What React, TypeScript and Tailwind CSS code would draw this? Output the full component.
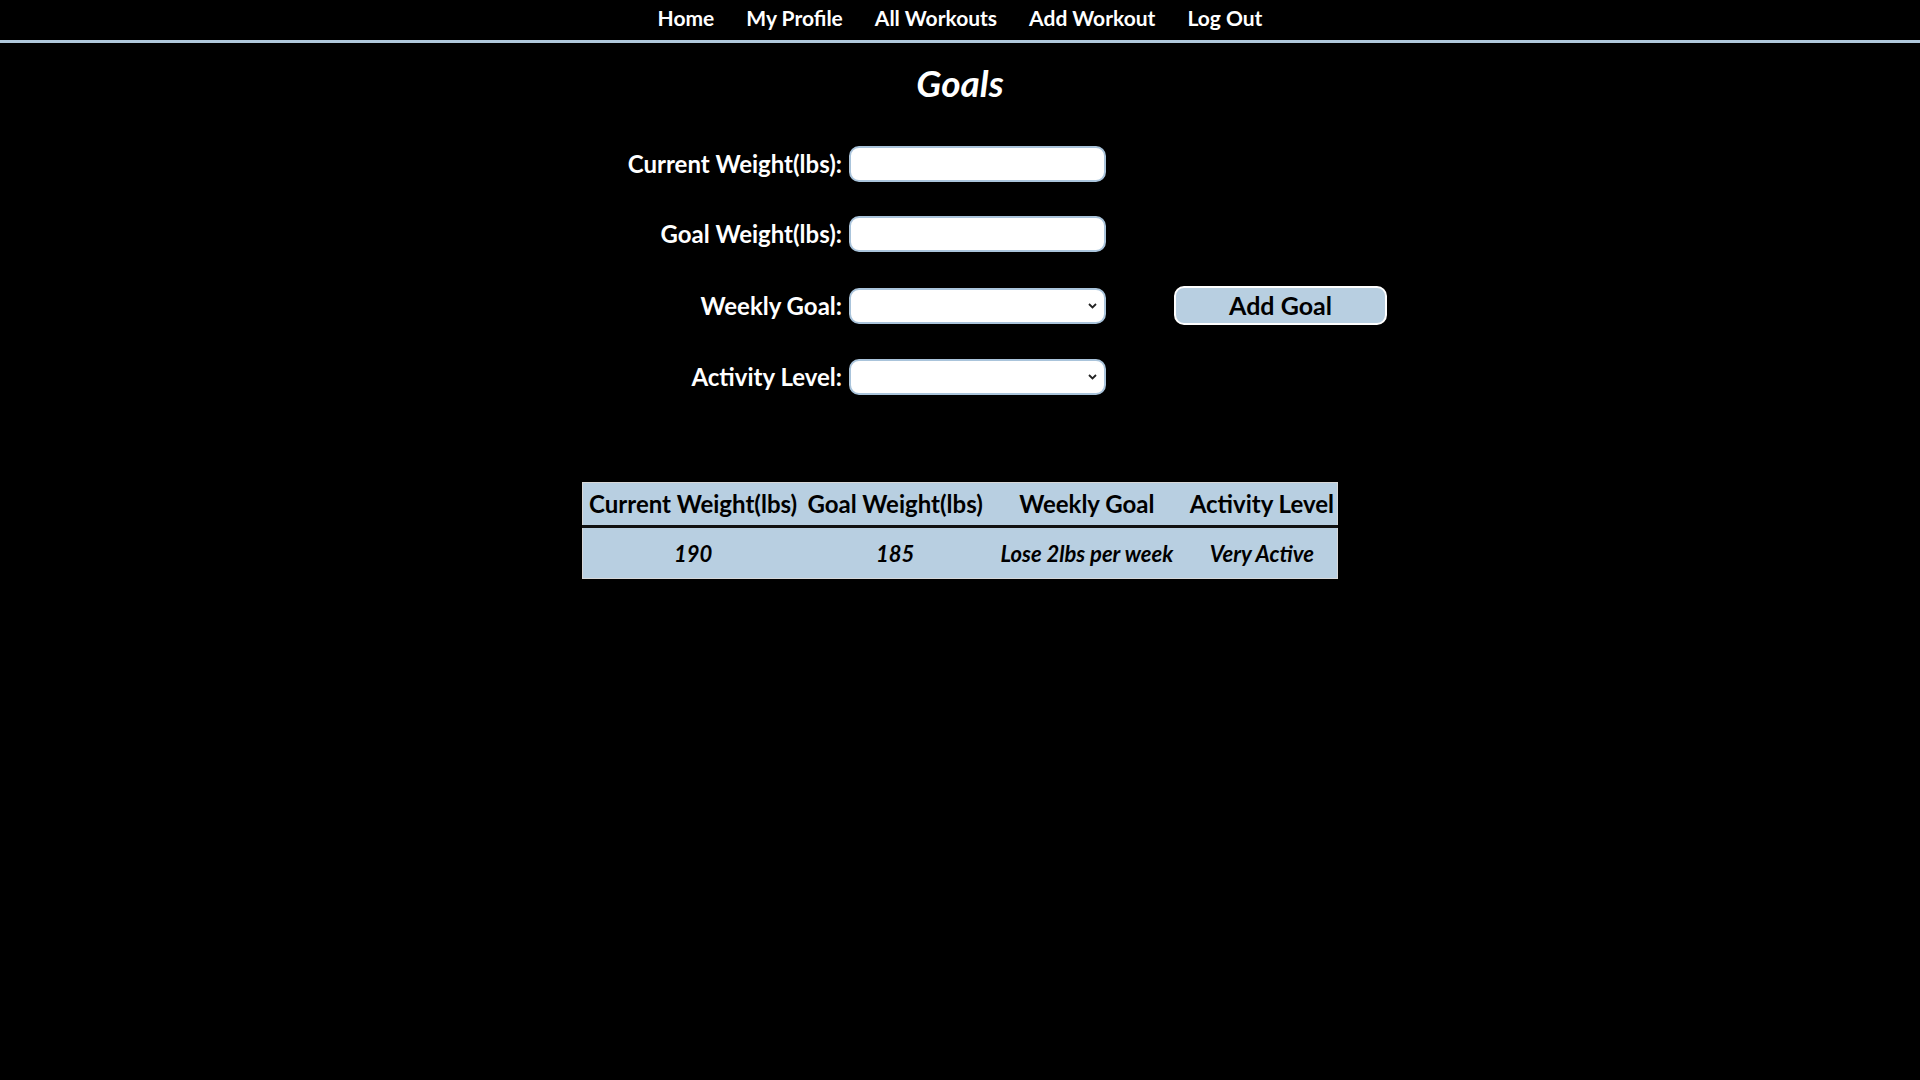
const navLinks = ["Home", "My Profile", "All Workouts", "Add Workout", "Log Out"];

const Chevron = () => (
   <svg
      className="pointer-events-none absolute right-[9px] top-1/2 -translate-y-1/2"
      width="9"
      height="6"
      viewBox="0 0 9 6"
      fill="none"
   >
      <path d="M1 1l3.5 3.5L8 1" stroke="#222" strokeWidth="1.8" />
   </svg>
);

const Field = ({ label, select }: { label: string; select?: boolean }) => (
   <>
      <label className="text-right text-[24px] font-bold text-white leading-none">{label}</label>
      <div className="relative h-[36px]">
         {select ? (
            <>
               <select className="appearance-none w-full h-full bg-white rounded-[10px] border-2 border-[#aac4db] outline-none" />
               <Chevron />
            </>
         ) : (
            <input
               type="text"
               className="w-full h-full bg-white rounded-[10px] border-2 border-[#aac4db] outline-none px-2"
            />
         )}
      </div>
   </>
);

export default function App() {
   return (
      <div
         className="min-h-screen w-full bg-black text-white"
         style={{ fontFamily: "Lato, 'Open Sans', sans-serif" }}
      >
         <header className="h-[40px] border-b-[3px] border-[#b0c8dc] box-content">
            <nav>
               <ul className="flex justify-center gap-[32px] pt-[4px]">
                  {navLinks.map((l) => (
                     <li key={l}>
                        <a href="#" className="text-[21px] font-bold text-white leading-[28px]">
                           {l}
                        </a>
                     </li>
                  ))}
               </ul>
            </nav>
         </header>

         <h1 className="text-center text-[37px] font-bold italic leading-[44px] mt-[18px]">Goals</h1>

         <form className="flex justify-center mt-[41px]">
            <div className="grid grid-cols-[309px_257px_274px] gap-x-[7px] gap-y-[34px] items-center">
               <Field label="Current Weight(lbs):" />
               <div />
               <Field label="Goal Weight(lbs):" />
               <div />
               <Field label="Weekly Goal:" select />
               <button
                  type="button"
                  className="ml-[61px] w-[213px] h-[39px] rounded-[10px] border-2 border-white bg-[#b8cfe1] text-black text-[25px] font-bold leading-none"
               >
                  Add Goal
               </button>
               <Field label="Activity Level:" select />
               <div />
            </div>
         </form>

         <div className="flex justify-center mt-[87px]">
            <table className="w-[756px] border border-[#d8d8d8] bg-[#b8cfe1] text-black border-collapse">
               <thead>
                  <tr className="h-[44px] border-b-[3px] border-[#111]">
                     <th className="w-[221px] text-[24px] font-bold">Current Weight(lbs)</th>
                     <th className="w-[184px] text-[24px] font-bold">Goal Weight(lbs)</th>
                     <th className="w-[200px] text-[24px] font-bold">Weekly Goal</th>
                     <th className="w-[151px] text-[24px] font-bold">Activity Level</th>
                  </tr>
               </thead>
               <tbody>
                  <tr className="h-[52px]">
                     <td className="text-center text-[22px] font-bold italic">190</td>
                     <td className="text-center text-[22px] font-bold italic">185</td>
                     <td className="text-center text-[22px] font-bold italic">Lose 2lbs per week</td>
                     <td className="text-center text-[22px] font-bold italic">Very Active</td>
                  </tr>
               </tbody>
            </table>
         </div>
      </div>
   );
}
